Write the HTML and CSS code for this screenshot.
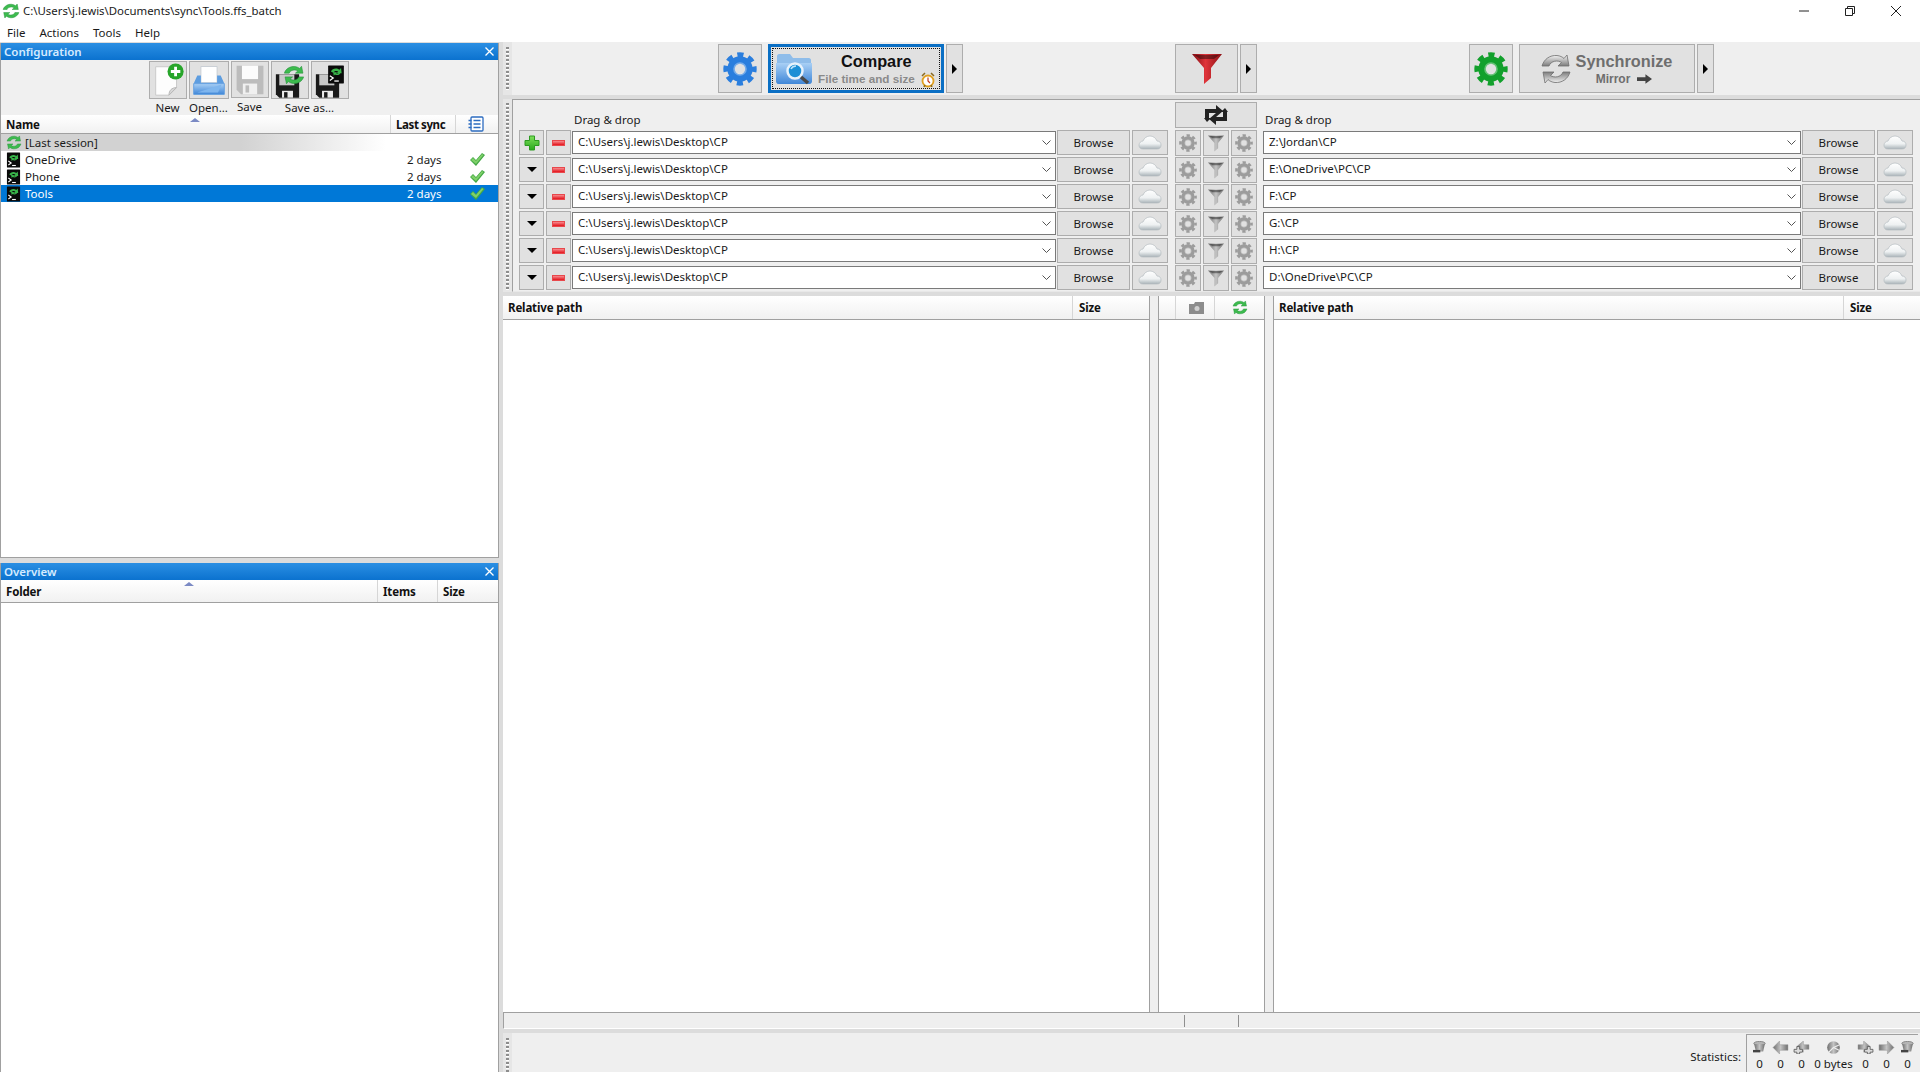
FILE: index.html
```html
<!DOCTYPE html>
<html lang="en">

<head>
    <meta charset="UTF-8">
    <title>C:\Users\j.lewis\Documents\sync\Tools.ffs_batch</title>
    <link rel="stylesheet" href="styles.css">
</head>

<body>
    <svg class="icon-defs" xmlns="http://www.w3.org/2000/svg">
        <defs>
            <linearGradient id="gr-blue" x1="0" y1="0" x2="0" y2="1"><stop offset="0" stop-color="#a9d0f5"/><stop offset="1" stop-color="#3f86d8"/></linearGradient>
            <linearGradient id="gr-red" x1="0" y1="0" x2="1" y2="0"><stop offset="0" stop-color="#7d0d12"/><stop offset=".45" stop-color="#e0343a"/><stop offset="1" stop-color="#8c1015"/></linearGradient>
            <linearGradient id="gr-grey" x1="0" y1="0" x2="1" y2="0"><stop offset="0" stop-color="#6f6f6f"/><stop offset=".5" stop-color="#c4c4c4"/><stop offset="1" stop-color="#6f6f6f"/></linearGradient>
            <linearGradient id="gr-cloud" x1="0" y1="0" x2="0" y2="1"><stop offset="0" stop-color="#ffffff"/><stop offset=".6" stop-color="#eef1f2"/><stop offset="1" stop-color="#a9b3b8"/></linearGradient>
            <linearGradient id="gr-plus" x1="0" y1="0" x2="0" y2="1"><stop offset="0" stop-color="#7ee05a"/><stop offset="1" stop-color="#2aa81e"/></linearGradient>
            <linearGradient id="gr-sync" x1="0" y1="0" x2="0" y2="1"><stop offset="0" stop-color="#f4f4f4"/><stop offset="1" stop-color="#7c7c7c"/></linearGradient>

            <symbol id="i-gear" viewBox="0 0 32 32">
                <circle cx="16" cy="16" r="13.4" fill="none" stroke="currentColor" stroke-width="4.6" stroke-dasharray="5.8 4.72" stroke-dashoffset="2.9"/>
                <circle cx="16" cy="16" r="8.4" fill="none" stroke="currentColor" stroke-width="7"/>
                <circle cx="16" cy="16" r="5.6" fill="none" stroke="#fff" stroke-opacity=".35" stroke-width="1.600"/>
            </symbol>
            <symbol id="i-arrows" viewBox="0 0 32 32">
                <g id="i-arrow-half">
                    <path d="M2 13C4 6 10 2 17 2.500c3 .3 5.500 1.500 7 3L27 2l2 11H18l3.500-3.500C18 7 11 7.500 9 13z"/>
                </g>
                <use href="#i-arrow-half" transform="rotate(180 16 16)"/>
            </symbol>
            <symbol id="i-sync" viewBox="0 0 32 32" preserveAspectRatio="none">
                <use href="#i-arrows" fill="#3dbb4e" stroke="#1c8a34" stroke-width=".8"/>
            </symbol>
            <symbol id="i-batch" viewBox="0 0 32 32" preserveAspectRatio="none">
                <rect x="2" y="1" width="28" height="30" rx="1" fill="#0a0a0a"/>
                <path d="M7 11c2-5 10-7 15-3l3-3 1 9h-9l3-3c-3-2-7-1-9 2zM24 13c-1 4-6 5-10 3l-2 2-1-6 7 0-2 2c2 1 4 1 5-1z" fill="#39b54a"/>
                <path d="M5 18l6 4-6 4" fill="none" stroke="#fff" stroke-width="2.200"/>
                <path d="M13 27h8" stroke="#fff" stroke-width="2.200"/>
            </symbol>
            <symbol id="i-new" viewBox="0 0 38 38">
                <path d="M6 5h22v22l-8 8H6z" fill="#fdfdfd" stroke="#c8c8c8"/>
                <path d="M20 35c0-5 3-8 8-8z" fill="#d8d8d8" stroke="#b5b5b5"/>
                <circle cx="27" cy="10" r="8.500" fill="#27a52a"/>
                <path d="M27 5v10M22 10h10" stroke="#fff" stroke-width="3"/>
            </symbol>
            <symbol id="i-open" viewBox="0 0 40 38">
                <path d="M11 4h18v18H11z" fill="#fff" stroke="#c6ccd2"/>
                <path d="M7 14h4v8h18v-8h4l4 9H3z" fill="#5d9de0"/>
                <path d="M3 23h34v12H3z" fill="url(#gr-blue)" stroke="#5d9de0"/>
                <path d="M7 33h23l4-9" fill="#7fb6ee"/>
            </symbol>
            <symbol id="i-floppy" viewBox="0 0 38 38">
                <path d="M4 3h30v32H9l-5-5z" fill="currentColor"/>
                <rect x="10" y="3" width="18" height="15" fill="#fff" fill-opacity=".95"/>
                <rect x="11" y="23" width="16" height="12" fill="#f0f0f0"/>
                <rect x="14" y="25" width="4" height="8" fill="currentColor"/>
            </symbol>
            <symbol id="i-floppy-dark" viewBox="0 0 38 38">
                <path d="M2 2h34v34H7l-5-5z" fill="#1a1a1a"/>
                <rect x="7" y="2" width="22" height="16" fill="#c9c9c9"/>
                <rect x="11" y="26" width="16" height="10" fill="#ededed"/>
                <rect x="14" y="28" width="5" height="8" fill="#1a1a1a"/>
            </symbol>
            <symbol id="i-compare" viewBox="0 0 36 32">
                <path d="M1 3c0-1 1-2 2-2h11l3 4h16c1 0 2 1 2 2v22c0 1-1 2-2 2H1z" fill="#8fbdea"/>
                <path d="M0 10h36v18c0 2-1 3-3 3H3c-2 0-3-1-3-3z" fill="url(#gr-blue)"/>
                <circle cx="19" cy="18" r="7.500" fill="#1c8fd6" stroke="#e8f2fb" stroke-width="2.500"/>
                <path d="M25 24l7 6" stroke="#4a4a4a" stroke-width="3.500"/>
                <path d="M15 16c1-2 3-3 5-3" stroke="#bfe3fa" stroke-width="1.500" fill="none"/>
            </symbol>
            <symbol id="i-clock" viewBox="0 0 14 16">
                <circle cx="7" cy="9" r="5.500" fill="#fff" stroke="#e0a020" stroke-width="1.800"/>
                <path d="M7 5.500V9l2 2" stroke="#c23a1c" stroke-width="1.200" fill="none"/>
                <path d="M1 4l3-3M13 4l-3-3M3 15l1-2M11 15l-1-2" stroke="#8a6a20" stroke-width="1.500"/>
            </symbol>
            <symbol id="i-funnel" viewBox="0 0 30 30">
                <path d="M0 0h30L19 14v10l-7 6V14z"/>
                <path d="M3 1h24l-5 4H8z" fill="#000" fill-opacity=".4"/>
            </symbol>
            <symbol id="i-swap" viewBox="0 0 24 20">
                <path d="M1 4h11V0l7 6-7 6V8H5v5l2 0-4 4-3-4h1zM23 16H12v4l-7-6 7-6v4h7V7l-2 0 4-4 3 4h-1z" fill="#222"/>
            </symbol>
            <symbol id="i-cloud" viewBox="0 0 24 15">
                <path d="M5 14C2 14 1 12 1 10s2-4 4-4c1-3 4-5 7-5s6 2 7 5c3 0 4 2 4 4s-1 4-4 4z" fill="url(#gr-cloud)" stroke="#b4bcc0" stroke-width=".7"/>
            </symbol>
            <symbol id="i-plus" viewBox="0 0 16 16">
                <path d="M5.500 1h5v4.500H15v5h-4.500V15h-5v-4.500H1v-5h4.500z" fill="url(#gr-plus)" stroke="#2c9a20"/>
            </symbol>
            <symbol id="i-check" viewBox="0 0 15 13">
                <path d="M0 7l3-3 3 3 6-7 3 2-9 11z" fill="#43a845"/>
                <path d="M1 7l2-2 3 3 6-7 1.500 1-7.500 9z" fill="#7fd069"/>
            </symbol>
            <symbol id="i-list" viewBox="0 0 16 16">
                <rect x="3" y="1" width="12" height="14" rx="1" fill="#fff" stroke="#2d6cc0" stroke-width="1.300"/>
                <path d="M5.500 4.500h7M5.500 8h7M5.500 11.500h7M0.500 4.500h3M0.500 8h3M0.500 11.500h3" stroke="#2d6cc0" stroke-width="1.300"/>
            </symbol>
            <symbol id="i-bin" viewBox="0 0 16 16">
                <ellipse cx="8" cy="3" rx="7" ry="2.500" fill="#b5b5b5" stroke="#777"/>
                <path d="M1.500 4l2 9h9l2-9z" fill="url(#gr-grey)"/>
                <rect x="0" y="11" width="9" height="3" fill="#444"/>
            </symbol>
            <symbol id="i-arrow-left" viewBox="0 0 16 14">
                <path d="M0 7l7-7v4h9v6H7v4z" fill="url(#gr-grey)" stroke="#8f8f8f" stroke-width=".5"/>
            </symbol>
            <symbol id="i-arrow-plus" viewBox="0 0 16 14">
                <path d="M3 6l7-6v4h6v5H10v3z" fill="url(#gr-grey)" stroke="#8f8f8f" stroke-width=".5"/>
                <path d="M3 6h3v3h3v3H6v2H3v-2H0V9h3z" fill="#ddd" stroke="#555" stroke-width=".9"/>
            </symbol>
            <symbol id="i-pie" viewBox="0 0 16 14">
                <circle cx="8" cy="7" r="6.800" fill="url(#gr-grey)"/>
                <path d="M8 7L14.500 4M8 7L3 12M8 7l6 3" stroke="#eee" stroke-width="1.200"/>
            </symbol>
        </defs>
    </svg>

    <div class="window">
        <div class="titlebar">
            <svg class="title-icon"><use href="#i-sync"/></svg>
            <span class="title-text">C:\Users\j.lewis\Documents\sync\Tools.ffs_batch</span>
            <div class="win-buttons">
                <span class="win-btn"><svg width="12" height="12" viewBox="0 0 12 12"><path d="M1 6h10" stroke="#222"/></svg></span>
                <span class="win-btn"><svg width="12" height="12" viewBox="0 0 12 12"><path d="M1.500 3.500h7v7h-7zM3.500 3.500v-2h7v7h-2" fill="none" stroke="#222"/></svg></span>
                <span class="win-btn"><svg width="12" height="12" viewBox="0 0 12 12"><path d="M1 1l10 10M11 1L1 11" stroke="#222"/></svg></span>
            </div>
        </div>
        <div class="menubar">
            <span>File</span>
            <span>Actions</span>
            <span>Tools</span>
            <span>Help</span>
        </div>

        <div class="client">
            <div class="side">
                <div class="panel panel-config">
                    <div class="caption"><span>Configuration</span><svg class="caption-x" width="9" height="9" viewBox="0 0 9 9"><path d="M.5.5l8 8M8.500.5l-8 8" stroke="#fff" stroke-width="1.300"/></svg></div>
                    <div class="cfg-tools">
                        <div class="cfg-group">
                            <div class="cfg-btn"><svg><use href="#i-new"/></svg></div>
                            <span>New</span>
                        </div>
                        <div class="cfg-group">
                            <div class="cfg-btn cfg-btn-wide"><svg><use href="#i-open"/></svg></div>
                            <span>Open...</span>
                        </div>
                        <div class="cfg-group">
                            <div class="cfg-btn"><svg class="floppy-off"><use href="#i-floppy"/></svg></div>
                            <span>Save</span>
                        </div>
                        <div class="cfg-group">
                            <div class="cfg-pair">
                                <div class="cfg-btn">
                                    <svg class="floppy-on"><use href="#i-floppy-dark"/></svg>
                                    <svg class="cfg-badge cfg-badge-sync"><use href="#i-sync"/></svg>
                                </div>
                                <div class="cfg-btn">
                                    <svg class="floppy-on"><use href="#i-floppy-dark"/></svg>
                                    <svg class="cfg-badge cfg-badge-batch"><use href="#i-batch"/></svg>
                                </div>
                            </div>
                            <span>Save as...</span>
                        </div>
                    </div>
                    <div class="list-head">
                        <span class="sort-mark sort-cfg"></span>
                        <div class="col col-name">Name</div>
                        <div class="col col-sync">Last sync</div>
                        <div class="col col-state"><svg class="list-icon"><use href="#i-list"/></svg></div>
                    </div>
                    <div class="cfg-list">
                        <div class="cfg-row cfg-row-last">
                            <svg class="row-icon row-icon-sync"><use href="#i-sync"/></svg>
                            <span class="row-name">[Last session]</span>
                        </div>
                        <div class="cfg-row">
                            <svg class="row-icon"><use href="#i-batch"/></svg>
                            <span class="row-name">OneDrive</span>
                            <span class="row-days">2 days</span>
                            <svg class="row-check"><use href="#i-check"/></svg>
                        </div>
                        <div class="cfg-row">
                            <svg class="row-icon"><use href="#i-batch"/></svg>
                            <span class="row-name">Phone</span>
                            <span class="row-days">2 days</span>
                            <svg class="row-check"><use href="#i-check"/></svg>
                        </div>
                        <div class="cfg-row cfg-row-selected">
                            <svg class="row-icon"><use href="#i-batch"/></svg>
                            <span class="row-name">Tools</span>
                            <span class="row-days">2 days</span>
                            <svg class="row-check"><use href="#i-check"/></svg>
                        </div>
                    </div>
                </div>
                <div class="panel panel-overview">
                    <div class="caption"><span>Overview</span><svg class="caption-x" width="9" height="9" viewBox="0 0 9 9"><path d="M.5.5l8 8M8.500.5l-8 8" stroke="#fff" stroke-width="1.300"/></svg></div>
                    <div class="list-head list-head-over">
                        <span class="sort-mark sort-over"></span>
                        <div class="col col-folder">Folder</div>
                        <div class="col col-items">Items</div>
                        <div class="col col-osize">Size</div>
                    </div>
                </div>
            </div>

            <div class="main">
                <div class="toolbar-row">
                    <div class="grip-strip"><span class="grip grip-top"></span></div>
                    <div class="toolbar">
                        <div class="tool-btn tool-cfg"><svg class="gear-big gear-blue"><use href="#i-gear"/></svg></div>
                        <div class="tool-btn tool-compare">
                            <svg class="compare-icon"><use href="#i-compare"/></svg>
                            <div class="compare-text">
                                <strong>Compare</strong>
                                <small>File time and size</small>
                            </div>
                            <svg class="clock-icon"><use href="#i-clock"/></svg>
                        </div>
                        <div class="tool-btn tool-drop"></div>
                        <div class="tool-btn tool-filter"><svg class="funnel-big"><use href="#i-funnel" fill="url(#gr-red)"/></svg></div>
                        <div class="tool-btn tool-drop"></div>
                        <div class="tool-btn tool-cfg tool-synccfg"><svg class="gear-big gear-green"><use href="#i-gear"/></svg></div>
                        <div class="tool-btn tool-sync">
                            <svg class="sync-icon"><use href="#i-arrows" fill="url(#gr-sync)" stroke="#6f6f6f" stroke-width=".8"/></svg>
                            <div class="sync-text">
                                <strong>Synchronize</strong>
                                <small>Mirror <svg class="mirror-arrow" viewBox="0 0 16 10"><path d="M0 3h9V0l7 5-7 5V7H0z" fill="#444"/></svg></small>
                            </div>
                        </div>
                        <div class="tool-btn tool-drop"></div>
                    </div>
                </div>

                <div class="folders-row">
                    <div class="grip-strip"><span class="grip grip-folders"></span></div>
                    <div class="folders">
                        <div class="pane pane-left">
                            <div class="drop-label">Drag &amp; drop</div>
                            <div class="pair-row">
                                <div class="sq-btn"><svg class="plus-icon"><use href="#i-plus"/></svg></div>
                                <div class="sq-btn"><span class="minus"></span></div>
                                <div class="path-box"><span>C:\Users\j.lewis\Desktop\CP</span><svg class="chevron" viewBox="0 0 9 5"><path d="M.5.500l4 4 4-4" fill="none" stroke="#555"/></svg></div>
                                <div class="browse">Browse</div>
                                <div class="cloud-btn"><svg class="cloud"><use href="#i-cloud"/></svg></div>
                            </div>
                            <div class="pair-row">
                                <div class="sq-btn"><span class="tri-down"></span></div>
                                <div class="sq-btn"><span class="minus"></span></div>
                                <div class="path-box"><span>C:\Users\j.lewis\Desktop\CP</span><svg class="chevron" viewBox="0 0 9 5"><path d="M.5.500l4 4 4-4" fill="none" stroke="#555"/></svg></div>
                                <div class="browse">Browse</div>
                                <div class="cloud-btn"><svg class="cloud"><use href="#i-cloud"/></svg></div>
                            </div>
                            <div class="pair-row">
                                <div class="sq-btn"><span class="tri-down"></span></div>
                                <div class="sq-btn"><span class="minus"></span></div>
                                <div class="path-box"><span>C:\Users\j.lewis\Desktop\CP</span><svg class="chevron" viewBox="0 0 9 5"><path d="M.5.500l4 4 4-4" fill="none" stroke="#555"/></svg></div>
                                <div class="browse">Browse</div>
                                <div class="cloud-btn"><svg class="cloud"><use href="#i-cloud"/></svg></div>
                            </div>
                            <div class="pair-row">
                                <div class="sq-btn"><span class="tri-down"></span></div>
                                <div class="sq-btn"><span class="minus"></span></div>
                                <div class="path-box"><span>C:\Users\j.lewis\Desktop\CP</span><svg class="chevron" viewBox="0 0 9 5"><path d="M.5.500l4 4 4-4" fill="none" stroke="#555"/></svg></div>
                                <div class="browse">Browse</div>
                                <div class="cloud-btn"><svg class="cloud"><use href="#i-cloud"/></svg></div>
                            </div>
                            <div class="pair-row">
                                <div class="sq-btn"><span class="tri-down"></span></div>
                                <div class="sq-btn"><span class="minus"></span></div>
                                <div class="path-box"><span>C:\Users\j.lewis\Desktop\CP</span><svg class="chevron" viewBox="0 0 9 5"><path d="M.5.500l4 4 4-4" fill="none" stroke="#555"/></svg></div>
                                <div class="browse">Browse</div>
                                <div class="cloud-btn"><svg class="cloud"><use href="#i-cloud"/></svg></div>
                            </div>
                            <div class="pair-row">
                                <div class="sq-btn"><span class="tri-down"></span></div>
                                <div class="sq-btn"><span class="minus"></span></div>
                                <div class="path-box"><span>C:\Users\j.lewis\Desktop\CP</span><svg class="chevron" viewBox="0 0 9 5"><path d="M.5.500l4 4 4-4" fill="none" stroke="#555"/></svg></div>
                                <div class="browse">Browse</div>
                                <div class="cloud-btn"><svg class="cloud"><use href="#i-cloud"/></svg></div>
                            </div>
                        </div>

                        <div class="pane pane-mid">
                            <div class="swap-btn"><svg class="swap-icon"><use href="#i-swap"/></svg></div>
                            <div class="mid-row">
                                <div class="mini-btn"><svg class="gear-small"><use href="#i-gear"/></svg></div>
                                <div class="mini-btn"><svg class="funnel-small"><use href="#i-funnel" fill="url(#gr-grey)"/></svg></div>
                                <div class="mini-btn"><svg class="gear-small"><use href="#i-gear"/></svg></div>
                            </div>
                            <div class="mid-row">
                                <div class="mini-btn"><svg class="gear-small"><use href="#i-gear"/></svg></div>
                                <div class="mini-btn"><svg class="funnel-small"><use href="#i-funnel" fill="url(#gr-grey)"/></svg></div>
                                <div class="mini-btn"><svg class="gear-small"><use href="#i-gear"/></svg></div>
                            </div>
                            <div class="mid-row">
                                <div class="mini-btn"><svg class="gear-small"><use href="#i-gear"/></svg></div>
                                <div class="mini-btn"><svg class="funnel-small"><use href="#i-funnel" fill="url(#gr-grey)"/></svg></div>
                                <div class="mini-btn"><svg class="gear-small"><use href="#i-gear"/></svg></div>
                            </div>
                            <div class="mid-row">
                                <div class="mini-btn"><svg class="gear-small"><use href="#i-gear"/></svg></div>
                                <div class="mini-btn"><svg class="funnel-small"><use href="#i-funnel" fill="url(#gr-grey)"/></svg></div>
                                <div class="mini-btn"><svg class="gear-small"><use href="#i-gear"/></svg></div>
                            </div>
                            <div class="mid-row">
                                <div class="mini-btn"><svg class="gear-small"><use href="#i-gear"/></svg></div>
                                <div class="mini-btn"><svg class="funnel-small"><use href="#i-funnel" fill="url(#gr-grey)"/></svg></div>
                                <div class="mini-btn"><svg class="gear-small"><use href="#i-gear"/></svg></div>
                            </div>
                            <div class="mid-row">
                                <div class="mini-btn"><svg class="gear-small"><use href="#i-gear"/></svg></div>
                                <div class="mini-btn"><svg class="funnel-small"><use href="#i-funnel" fill="url(#gr-grey)"/></svg></div>
                                <div class="mini-btn"><svg class="gear-small"><use href="#i-gear"/></svg></div>
                            </div>
                        </div>

                        <div class="pane pane-right">
                            <div class="drop-label drop-label-right">Drag &amp; drop</div>
                            <div class="pair-row">
                                <div class="path-box path-box-right"><span>Z:\Jordan\CP</span><svg class="chevron" viewBox="0 0 9 5"><path d="M.5.500l4 4 4-4" fill="none" stroke="#555"/></svg></div>
                                <div class="browse">Browse</div>
                                <div class="cloud-btn"><svg class="cloud"><use href="#i-cloud"/></svg></div>
                            </div>
                            <div class="pair-row">
                                <div class="path-box path-box-right"><span>E:\OneDrive\PC\CP</span><svg class="chevron" viewBox="0 0 9 5"><path d="M.5.500l4 4 4-4" fill="none" stroke="#555"/></svg></div>
                                <div class="browse">Browse</div>
                                <div class="cloud-btn"><svg class="cloud"><use href="#i-cloud"/></svg></div>
                            </div>
                            <div class="pair-row">
                                <div class="path-box path-box-right"><span>F:\CP</span><svg class="chevron" viewBox="0 0 9 5"><path d="M.5.500l4 4 4-4" fill="none" stroke="#555"/></svg></div>
                                <div class="browse">Browse</div>
                                <div class="cloud-btn"><svg class="cloud"><use href="#i-cloud"/></svg></div>
                            </div>
                            <div class="pair-row">
                                <div class="path-box path-box-right"><span>G:\CP</span><svg class="chevron" viewBox="0 0 9 5"><path d="M.5.500l4 4 4-4" fill="none" stroke="#555"/></svg></div>
                                <div class="browse">Browse</div>
                                <div class="cloud-btn"><svg class="cloud"><use href="#i-cloud"/></svg></div>
                            </div>
                            <div class="pair-row">
                                <div class="path-box path-box-right"><span>H:\CP</span><svg class="chevron" viewBox="0 0 9 5"><path d="M.5.500l4 4 4-4" fill="none" stroke="#555"/></svg></div>
                                <div class="browse">Browse</div>
                                <div class="cloud-btn"><svg class="cloud"><use href="#i-cloud"/></svg></div>
                            </div>
                            <div class="pair-row">
                                <div class="path-box path-box-right"><span>D:\OneDrive\PC\CP</span><svg class="chevron" viewBox="0 0 9 5"><path d="M.5.500l4 4 4-4" fill="none" stroke="#555"/></svg></div>
                                <div class="browse">Browse</div>
                                <div class="cloud-btn"><svg class="cloud"><use href="#i-cloud"/></svg></div>
                            </div>
                        </div>
                    </div>
                </div>

                <div class="grids">
                    <div class="grid grid-left">
                        <div class="grid-head">
                            <div class="col col-path">Relative path</div>
                            <div class="col col-size">Size</div>
                        </div>
                    </div>
                    <div class="grid-sash"></div>
                    <div class="grid grid-mid">
                        <div class="grid-head">
                            <div class="col col-mid-a"></div>
                            <div class="col col-mid-b"><svg class="mid-camera" viewBox="0 0 16 12"><path d="M0 2h5l1-2h9v12H0z" fill="#8c8c8c"/><circle cx="8" cy="6.500" r="2.500" fill="#d0d0d0"/></svg></div>
                            <div class="col col-mid-c"><svg class="mid-sync"><use href="#i-sync"/></svg></div>
                        </div>
                    </div>
                    <div class="grid-sash"></div>
                    <div class="grid grid-right">
                        <div class="grid-head">
                            <div class="col col-path">Relative path</div>
                            <div class="col col-size">Size</div>
                        </div>
                    </div>
                </div>

                <div class="scroll-row">
                    <span class="scroll-seg"></span>
                </div>

                <div class="status-row">
                    <div class="grip-strip"><span class="grip grip-bottom"></span></div>
                    <div class="status">
                        <span class="stats-label">Statistics:</span>
                        <div class="stats">
                            <div class="stat"><svg class="stat-icon"><use href="#i-bin"/></svg><span>0</span></div>
                            <div class="stat"><svg class="stat-icon"><use href="#i-arrow-left"/></svg><span>0</span></div>
                            <div class="stat"><svg class="stat-icon"><use href="#i-arrow-plus"/></svg><span>0</span></div>
                            <div class="stat stat-wide"><svg class="stat-icon"><use href="#i-pie"/></svg><span>0 bytes</span></div>
                            <div class="stat"><svg class="stat-icon stat-flip"><use href="#i-arrow-plus"/></svg><span>0</span></div>
                            <div class="stat"><svg class="stat-icon stat-flip"><use href="#i-arrow-left"/></svg><span>0</span></div>
                            <div class="stat"><svg class="stat-icon"><use href="#i-bin"/></svg><span>0</span></div>
                        </div>
                    </div>
                </div>
            </div>
        </div>
    </div>
</body>

</html>
```

FILE: styles.css
```css
* {
    box-sizing: border-box;
}

html, body {
    margin: 0;
    padding: 0;
    background: #fff;
}

body {
    font-family: "Noto Sans", "Open Sans", sans-serif;
    font-size: 11.5px;
    color: #1a1a1a;
    overflow: hidden;
}

.icon-defs {
    display: block;
    width: 0;
    height: 0;
}

.window {
    width: 1920px;
    height: 1072px;
    display: flex;
    flex-direction: column;
}

/* title and menu */

.titlebar {
    height: 21px;
    display: flex;
    align-items: center;
    background: #fff;
}

.title-icon {
    width: 18px;
    height: 16px;
    margin: 0 3px 0 2px;
}

.title-text {
    flex: 1;
    font-size: 11.4px;
}

.win-buttons {
    display: flex;
    padding-right: 1px;
}

.win-btn {
    width: 46px;
    height: 21px;
    display: flex;
    align-items: center;
    justify-content: center;
}

.menubar {
    height: 21px;
    display: flex;
    align-items: center;
    gap: 14px;
    padding: 2px 0 0 7px;
    background: #fff;
}

.client {
    flex: 1;
    display: flex;
    background: #dcdcdc;
    min-height: 0;
}

/* left side panels */

.side {
    width: 499px;
    display: flex;
    flex-direction: column;
    gap: 5px;
    padding-top: 1px;
}

.panel {
    background: #fff;
    border: 1px solid #a0a0a0;
    border-top: 0;
    display: flex;
    flex-direction: column;
}

.panel-config {
    height: 515px;
}

.panel-overview {
    flex: 1;
    border-bottom: 0;
}

.caption {
    height: 17px;
    flex: none;
    display: flex;
    align-items: center;
    justify-content: space-between;
    padding: 0 4px 0 3px;
    background: linear-gradient(#2b8fe3, #0b72cf);
    color: #d5ebff;
    font-weight: 600;
}

.cfg-tools {
    height: 55px;
    flex: none;
    display: flex;
    justify-content: center;
    gap: 2px;
    padding: 1px 2px 0 0;
    background: #f0f0f0;
}

.cfg-group {
    display: flex;
    flex-direction: column;
    align-items: center;
}

.cfg-group > span {
    margin-top: 1px;
    line-height: 16px;
}

.cfg-pair {
    display: flex;
    gap: 2px;
}

.cfg-btn {
    width: 38px;
    height: 38px;
    position: relative;
    background: #e1e1e1;
    border: 1px solid #adadad;
    display: flex;
    align-items: center;
    justify-content: center;
}

.cfg-btn-wide {
    width: 40px;
}

.cfg-btn svg {
    width: 36px;
    height: 36px;
}

.cfg-btn svg.floppy-off {
    width: 34px;
    height: 34px;
    color: #bcbcbc;
}

.cfg-btn svg.floppy-on {
    width: 27px;
    height: 26px;
    align-self: flex-end;
    margin: 0 5px -1px 0;
}

.cfg-btn svg.cfg-badge-sync {
    position: absolute;
    width: 22px;
    height: 20px;
    right: 3px;
    top: 3px;
}

.cfg-btn svg.cfg-badge-batch {
    position: absolute;
    width: 18px;
    height: 19px;
    right: 3px;
    top: 3px;
}

.list-head {
    height: 19px;
    flex: none;
    position: relative;
    display: flex;
    background: linear-gradient(#ffffff, #f1f1f1);
    border-bottom: 1px solid #a0a0a0;
    font-weight: 700;
    letter-spacing: -0.15px;
    color: #111;
}

.list-head-over {
    height: 23px;
}

.col {
    display: flex;
    align-items: center;
    padding-left: 5px;
    border-right: 1px solid #d6d6d6;
}

.col-name {
    width: 390px;
}

.col-sync {
    width: 65px;
    letter-spacing: -0.4px;
}

.col-state {
    flex: 1;
    border-right: 0;
    padding: 0 2px 0 0;
    justify-content: center;
}

.list-icon {
    width: 16px;
    height: 16px;
}

.col-folder {
    width: 377px;
}

.col-items {
    width: 60px;
}

.col-osize {
    flex: 1;
    border-right: 0;
}

.sort-mark {
    position: absolute;
    border-left: 5px solid transparent;
    border-right: 5px solid transparent;
    border-bottom: 4px solid #7b8ac4;
}

.sort-cfg {
    left: 189px;
    top: 3px;
}

.sort-over {
    left: 183px;
    top: 2px;
}

.cfg-row {
    height: 17px;
    display: flex;
    align-items: center;
    padding-left: 5px;
}

.cfg-row-last {
    background: linear-gradient(to right, #d2d2d2 0, #d2d2d2 240px, #fff 385px);
}

.cfg-row-selected {
    background: #0078d7;
    color: #fff;
}

.row-icon {
    width: 15px;
    height: 16px;
    flex: none;
}

.row-icon-sync {
    width: 16px;
    height: 15px;
    margin-right: -1px;
}

.row-name {
    margin-left: 4px;
    width: 382px;
}

.row-days {
    width: 63px;
}

.row-check {
    width: 15px;
    height: 13px;
}

/* main area */

.main {
    width: 1421px;
    display: flex;
    flex-direction: column;
    padding-left: 4px;
}

.grip-strip {
    width: 9px;
    flex: none;
    background: #e6e6e6;
    padding-left: 3px;
}

.grip {
    display: block;
    width: 3px;
    background-image: repeating-linear-gradient(to bottom, #8d8d8d 0, #8d8d8d 2px, #fff 2px, #fff 3px, transparent 3px, transparent 4px);
}

.grip-top {
    height: 44px;
    margin-top: 5px;
}

.grip-folders {
    height: 187px;
    margin-top: 4px;
}

.grip-bottom {
    height: 34px;
    margin-top: 5px;
}

.toolbar-row {
    height: 53px;
    display: flex;
    flex: none;
}

.toolbar {
    flex: 1;
    display: flex;
    padding: 2px 0 0 206px;
    background: #efefef;
}

.tool-btn {
    height: 49px;
    background: #e1e1e1;
    border: 1px solid #adadad;
    display: flex;
    align-items: center;
    justify-content: center;
}

.tool-cfg {
    width: 44px;
}

.gear-big {
    width: 34px;
    height: 34px;
}

.gear-blue {
    color: #2a7ede;
}

.gear-green {
    color: #12a02c;
}

.tool-compare {
    width: 176px;
    margin-left: 6px;
    border: 3px solid #0a6fc4;
    outline: 1px dotted #111;
    outline-offset: -5px;
    position: relative;
    justify-content: flex-start;
    padding-left: 5px;
}

.compare-icon {
    width: 36px;
    height: 32px;
    flex: none;
}

.compare-text {
    margin-left: 6px;
    display: flex;
    flex-direction: column;
    align-items: flex-start;
    font-family: "Liberation Sans", Arial, sans-serif;
}

.compare-text strong {
    font-size: 16.3px;
    color: #111;
    line-height: 19px;
    margin-left: 23px;
}

.compare-text small {
    font-size: 11.7px;
    font-weight: bold;
    color: #8a8a8a;
    line-height: 15px;
}

.clock-icon {
    position: absolute;
    right: 6px;
    bottom: 2px;
    width: 14px;
    height: 16px;
}

.tool-drop {
    width: 17px;
    margin-left: 2px;
    position: relative;
}

.tool-drop::after {
    content: "";
    border-left: 5px solid #000;
    border-top: 5px solid transparent;
    border-bottom: 5px solid transparent;
}

.tool-filter {
    width: 63px;
    margin-left: 212px;
}

.funnel-big {
    width: 30px;
    height: 30px;
}

.tool-synccfg {
    margin-left: 212px;
}

.tool-sync {
    width: 176px;
    margin-left: 6px;
    justify-content: flex-start;
    padding-left: 20px;
}

.sync-icon {
    width: 32px;
    height: 32px;
    flex: none;
}

.sync-text {
    width: 98px;
    margin-left: 3px;
    padding-top: 1px;
    display: flex;
    flex-direction: column;
    align-items: center;
    font-family: "Liberation Sans", Arial, sans-serif;
    color: #6e6e6e;
}

.sync-text strong {
    font-size: 16.3px;
    line-height: 19px;
}

.sync-text small {
    font-size: 12px;
    font-weight: bold;
    line-height: 16px;
    display: flex;
    align-items: center;
    gap: 7px;
}

.mirror-arrow {
    width: 15px;
    height: 10px;
}

/* folder pairs */

.folders-row {
    height: 197px;
    flex: none;
    display: flex;
    padding-top: 4px;
    background: linear-gradient(#dcdcdc 4px, transparent 4px);
}

.folders {
    flex: 1;
    display: flex;
    background: #efefef;
    border-top: 1px solid #a0a0a0;
    border-left: 1px solid #a0a0a0;
    border-bottom: 1px solid #e8e8e8;
}

.pane-left {
    width: 662px;
    padding-left: 6px;
}

.pane-mid {
    width: 82px;
    padding-top: 2px;
}

.pane-right {
    margin-left: 6px;
    flex: 1;
}

.drop-label {
    height: 30px;
    padding: 10px 0 0 55px;
    line-height: 19px;
}

.drop-label-right {
    padding-left: 2px;
}

.pair-row {
    display: flex;
    height: 25px;
    margin-bottom: 2px;
}

.sq-btn {
    width: 25px;
    height: 25px;
    margin-right: 2px;
    background: #e1e1e1;
    border: 1px solid #adadad;
    display: flex;
    align-items: center;
    justify-content: center;
}

.sq-btn + .path-box {
    margin-left: -1px;
}

.plus-icon {
    width: 16px;
    height: 16px;
}

.minus {
    width: 13px;
    height: 6px;
    background: linear-gradient(#f78b8f, #e3141c);
    border: 1px solid #e8484c;
}

.tri-down {
    border-top: 5px solid #000;
    border-left: 5px solid transparent;
    border-right: 5px solid transparent;
}

.path-box {
    width: 484px;
    height: 23px;
    margin-top: 1px;
    margin-right: 1px;
    background: #fff;
    border: 1px solid #7a7a7a;
    display: flex;
    align-items: center;
    justify-content: space-between;
    padding: 0 4px 2px 5px;
}

.path-box-right {
    width: 538px;
}

.chevron {
    width: 9px;
    height: 5px;
    margin-top: 2px;
}

.browse {
    width: 73px;
    height: 25px;
    background: #e1e1e1;
    border: 1px solid #adadad;
    display: flex;
    align-items: center;
    justify-content: center;
}

.cloud-btn {
    width: 36px;
    height: 25px;
    margin-left: 2px;
    background: #e1e1e1;
    border: 1px solid #adadad;
    display: flex;
    align-items: center;
    justify-content: center;
}

.cloud {
    width: 24px;
    height: 15px;
}

.swap-btn {
    height: 26px;
    margin-bottom: 2px;
    background: #e1e1e1;
    border: 1px solid #adadad;
    display: flex;
    align-items: center;
    justify-content: center;
    padding-bottom: 1px;
}

.swap-icon {
    width: 24px;
    height: 20px;
}

.mid-row {
    display: flex;
    gap: 2px;
    height: 26px;
    margin-bottom: 1px;
}

.mini-btn {
    width: 26px;
    height: 26px;
    background: #e1e1e1;
    border: 1px solid #adadad;
    display: flex;
    align-items: center;
    justify-content: center;
}

.gear-small {
    width: 18px;
    height: 18px;
    color: #9c9c9c;
}

.funnel-small {
    width: 16px;
    height: 17px;
}

/* file grids */

.grids {
    flex: 1;
    min-height: 0;
    display: flex;
    margin-top: 4px;
}

.grid {
    background: #fff;
}

.grid-left {
    width: 646px;
}

.grid-mid {
    width: 105px;
}

.grid-right {
    flex: 1;
}

.grid-sash {
    width: 10px;
    background: #efefef;
    border-left: 1px solid #a0a0a0;
    border-right: 1px solid #a0a0a0;
}

.grid-head {
    height: 24px;
    display: flex;
    background: linear-gradient(#ffffff, #f1f1f1);
    border-bottom: 1px solid #a0a0a0;
    font-weight: 700;
    letter-spacing: -0.15px;
    color: #111;
}

.col-path {
    flex: 1;
}

.col-size {
    width: 76px;
    padding-left: 6px;
    border-right: 0;
}

.col-mid-a {
    width: 17px;
    padding: 0;
}

.col-mid-b {
    width: 39px;
    padding: 0 0 0 3px;
    justify-content: center;
}

.col-mid-c {
    flex: 1;
    border-right: 0;
    padding: 0;
    justify-content: center;
}

.mid-camera {
    width: 16px;
    height: 12px;
}

.mid-sync {
    width: 16px;
    height: 15px;
}

.scroll-row {
    height: 17px;
    flex: none;
    background: #efefef;
    border-top: 1px solid #a0a0a0;
    border-left: 1px solid #a0a0a0;
    border-bottom: 1px solid #fff;
    padding: 2px 0 1px 680px;
}

.scroll-seg {
    display: block;
    width: 55px;
    height: 100%;
    border-left: 1px solid #8f8f8f;
    border-right: 1px solid #8f8f8f;
}

.status-row {
    height: 43px;
    flex: none;
    display: flex;
    padding-top: 4px;
    background: linear-gradient(#dcdcdc 4px, transparent 4px);
}

.status {
    flex: 1;
    display: flex;
    justify-content: flex-end;
    align-items: flex-end;
    background: #efefef;
    padding-right: 2px;
}

.stats-label {
    margin: 0 5px 8px 0;
}

.stats {
    width: 172px;
    height: 38px;
    display: flex;
    padding-left: 2px;
    border-top: 1px solid #a0a0a0;
    border-left: 1px solid #a0a0a0;
}

.stat {
    width: 21px;
    display: flex;
    flex-direction: column;
    align-items: center;
    padding-top: 6px;
    line-height: 16px;
}

.stat-wide {
    width: 43px;
    white-space: nowrap;
}

.stat-icon {
    width: 17px;
    height: 16px;
    margin-bottom: 2px;
}

.stat-flip {
    transform: scaleX(-1);
}
```
